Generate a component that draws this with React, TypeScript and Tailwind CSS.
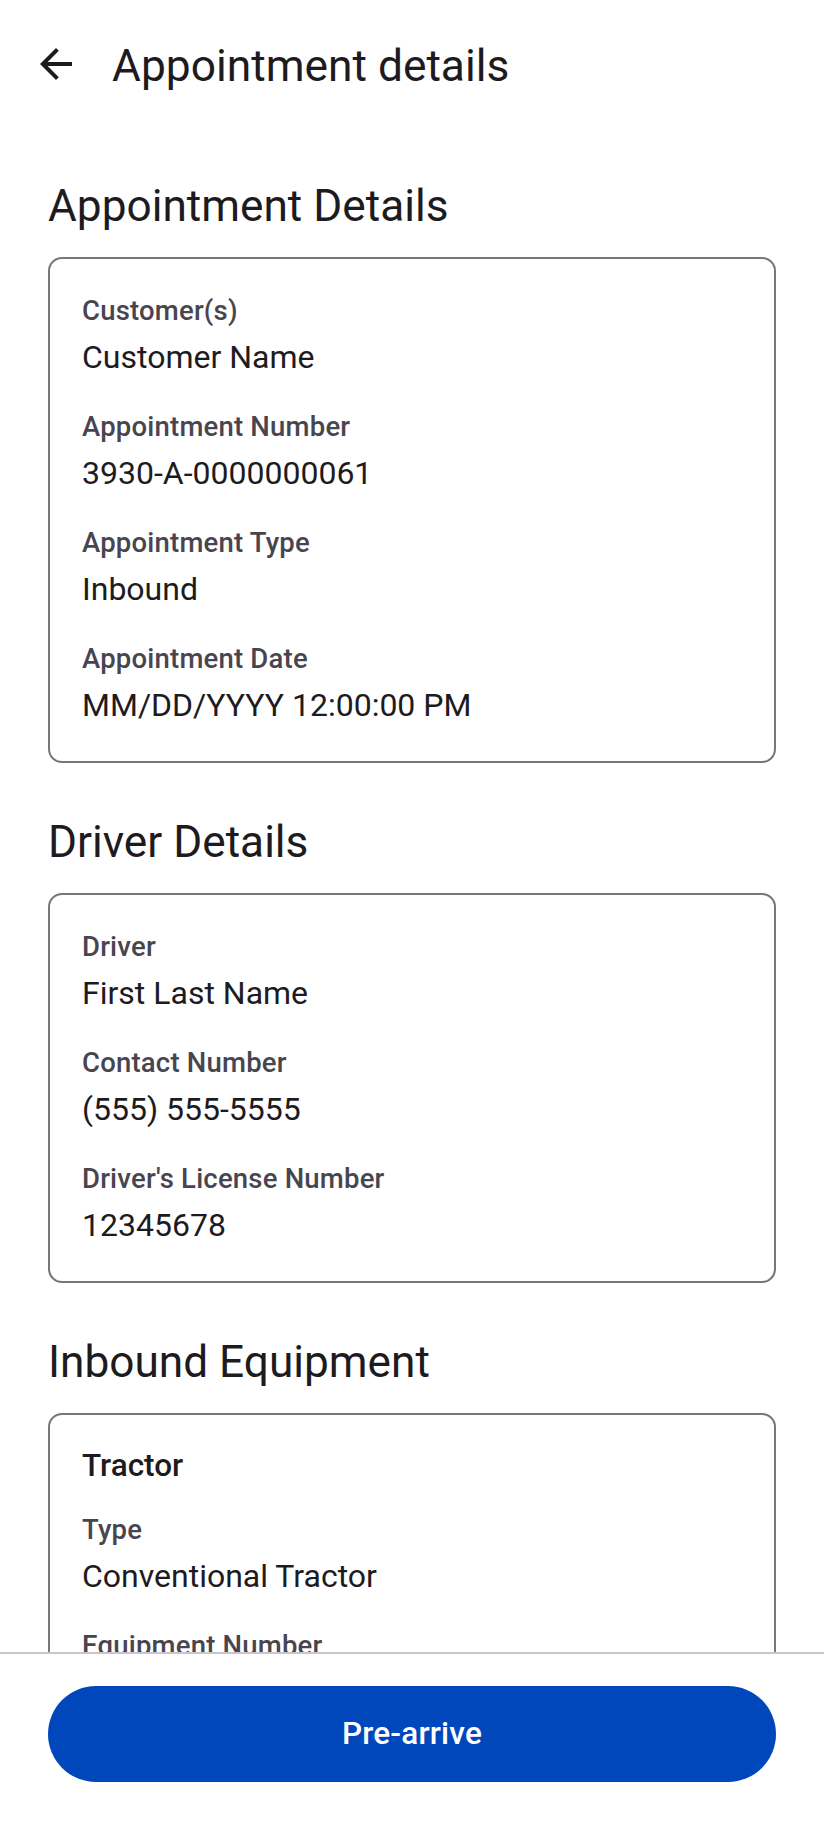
import React from "react";

type Item = { label: string; value: string };

function Field({ label, value }: Item) {
  return (
    <div className="flex flex-col">
      <p className="text-[27.5px] leading-[39.5px] font-medium text-[#49454f] tracking-[0.2px]">{label}</p>
      <p className="mt-[3.5px] text-[32px] leading-[47px] text-[#1d1b20]">{value}</p>
    </div>
  );
}

function Section({ title, children }: { title: string; children: React.ReactNode }) {
  return (
    <section className="shrink-0 flex flex-col">
      <h2 className="text-[44.2px] leading-[56px] text-[#1d1b20] mb-[23px]">{title}</h2>
      <div className="border-2 border-[#79747e] rounded-[14px] p-8 flex flex-col gap-[26px]">{children}</div>
    </section>
  );
}

export default function App() {
  return (
    <div className="h-screen w-full flex flex-col bg-white font-['Roboto',sans-serif] text-[#1d1b20]">
      <header className="h-[127px] shrink-0 flex items-center pl-8 gap-8">
        <svg width="48" height="48" viewBox="0 0 24 24" fill="#1d1b20" aria-hidden="true">
          <path d="M20 11H7.83l5.59-5.59L12 4l-8 8 8 8 1.41-1.41L7.83 13H20v-2z" />
        </svg>
        <h1 className="text-[44.3px] leading-[56px] pt-[5px] text-[#1d1b20]">Appointment details</h1>
      </header>
      <main className="flex-1 min-h-0 overflow-hidden px-12 pt-[51px] flex flex-col gap-[51px]">
        <Section title="Appointment Details">
          <Field label="Customer(s)" value="Customer Name" />
          <Field label="Appointment Number" value="3930-A-0000000061" />
          <Field label="Appointment Type" value="Inbound" />
          <Field label="Appointment Date" value="MM/DD/YYYY 12:00:00 PM" />
        </Section>
        <Section title="Driver Details">
          <Field label="Driver" value="First Last Name" />
          <Field label="Contact Number" value="(555) 555-5555" />
          <Field label="Driver's License Number" value="12345678" />
        </Section>
        <Section title="Inbound Equipment">
          <p className="text-[31.5px] leading-[37px] font-medium text-[#1d1b20]">Tractor</p>
          <Field label="Type" value="Conventional Tractor" />
          <Field label="Equipment Number" value="TR-0000001" />
          <Field label="License Plate" value="ABC1234" />
        </Section>
      </main>
      <footer className="shrink-0 border-t-2 border-[#cac4d0] bg-white px-12 pt-8 pb-12">
        <button className="w-full h-24 rounded-full bg-[#0047bb] text-white text-[31.5px] font-medium tracking-[0.2px]">
          Pre-arrive
        </button>
      </footer>
    </div>
  );
}
